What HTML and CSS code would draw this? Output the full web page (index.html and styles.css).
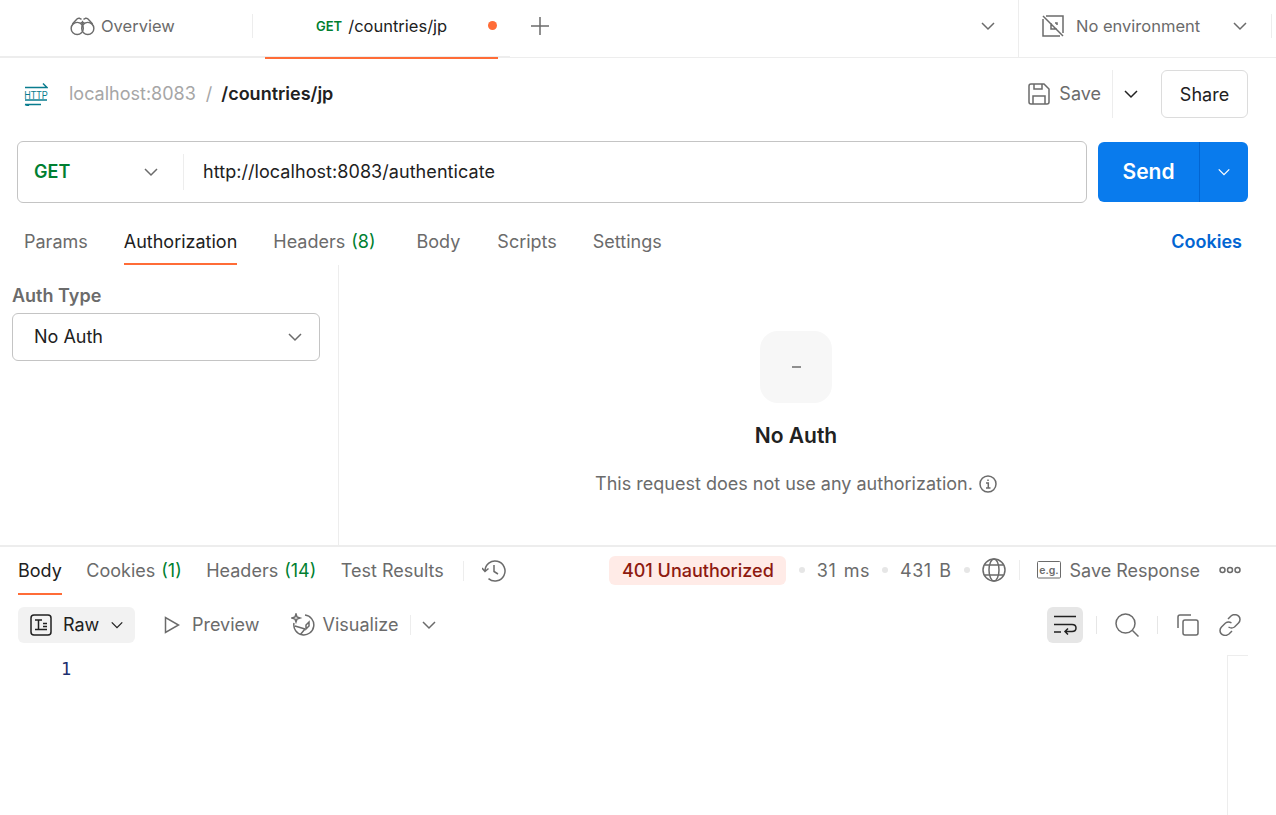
FILE: index.html
```html
<!DOCTYPE html>
<html lang="en">
<head>
    <meta charset="UTF-8">
    <title>/countries/jp</title>
    <link rel="stylesheet" href="styles.css">
</head>
<body>
    <!-- tab strip -->
    <header class="tabstrip">
        <div class="tab-overview">
            <svg class="icon" width="25" height="20" viewBox="0 0 26 20"><circle cx="7.500" cy="12.500" r="6.300"/><circle cx="18.500" cy="12.500" r="6.300"/><path d="M2.500 8 6.500 3.500Q8 1.500 10 2L12 3.200M23.500 8 19.500 3.500Q18 1.500 16 2L14 3.200M11 6.500h4M13 4.500v4"/></svg>
            <span>Overview</span>
        </div>
        <div class="tab-active">
            <span class="method-small">GET</span>
            <span class="tab-name">/countries/jp</span>
            <span class="dot"></span>
        </div>
        <svg class="icon plus" width="20" height="20" viewBox="0 0 20 20"><path d="M10 1v18M1 10h18"/></svg>
        <div class="strip-spacer"></div>
        <svg class="icon chev tabs-chev" width="16" height="16" viewBox="0 0 16 16"><path d="M2 5l6 6 6-6"/></svg>
        <div class="env">
            <svg class="icon" width="22" height="22" viewBox="0 0 22 22"><path d="M4 1h17v17M18 21H1V4M1 1l20 20M9 8v6h6M13 8h2v2"/></svg>
            <span class="env-name">No environment</span>
            <svg class="icon chev" width="16" height="16" viewBox="0 0 16 16"><path d="M2 5l6 6 6-6"/></svg>
            <span class="env-end"></span>
        </div>
    </header>

    <!-- request name row -->
    <div class="namebar">
        <svg class="http-icon" width="24" height="24" viewBox="0 0 24 24"><path d="M1 5.500h22l-4-4M1 18h22M1 22.500h16M1 22.500l4 1.500"/><text transform="translate(12 16.500) scale(.82 1)" text-anchor="middle">HTTP</text></svg>
        <span class="crumb">localhost:8083</span>
        <span class="crumb crumb-sep">/</span>
        <span class="crumb-current">/countries/jp</span>
        <div class="namebar-actions">
            <svg class="icon" width="22" height="22" viewBox="0 0 22 22"><path d="M1 3q0-2 2-2h13l5 5v13q0 2-2 2H3q-2 0-2-2zM6 1v5h8V1M5 21v-8h12v8"/></svg>
            <span class="save-label">Save</span>
            <span class="save-sep"></span>
            <svg class="icon chev dark" width="16" height="16" viewBox="0 0 16 16"><path d="M2 5l6 6 6-6"/></svg>
            <button class="btn-share">Share</button>
        </div>
    </div>

    <!-- url bar -->
    <div class="urlrow">
        <div class="urlbox">
            <div class="method-select">
                <span>GET</span>
                <svg class="icon chev" width="16" height="16" viewBox="0 0 16 16"><path d="M2 5l6 6 6-6"/></svg>
            </div>
            <span class="url">http://localhost:8083/authenticate</span>
        </div>
        <div class="btn-send">
            <span class="send-label">Send</span>
            <span class="send-arrow">
                <svg width="14" height="14" viewBox="0 0 16 16"><path d="M2 5l6 6 6-6"/></svg>
            </span>
        </div>
    </div>

    <!-- request tabs -->
    <nav class="req-tabs">
        <span class="req-tab">Params</span>
        <span class="req-tab selected">Authorization</span>
        <span class="req-tab">Headers <em>(8)</em></span>
        <span class="req-tab">Body</span>
        <span class="req-tab">Scripts</span>
        <span class="req-tab">Settings</span>
        <span class="cookies-link">Cookies</span>
    </nav>

    <section class="auth">
        <div class="auth-left">
            <div class="auth-label">Auth Type</div>
            <div class="auth-select">
                <span>No Auth</span>
                <svg class="icon chev" width="16" height="16" viewBox="0 0 16 16"><path d="M2 5l6 6 6-6"/></svg>
            </div>
        </div>
        <div class="auth-right">
            <div class="auth-tile"><span class="auth-dash"></span></div>
            <div class="auth-title">No Auth</div>
            <div class="auth-desc">
                <span>This request does not use any authorization.</span>
                <svg class="icon" width="18" height="18" viewBox="0 0 18 18"><circle cx="9" cy="9" r="8"/><path d="M7 8h2.300v5M7 13h4.500M9 4.500v1.500"/></svg>
            </div>
        </div>
    </section>

    <!-- response -->
    <section class="response">
        <div class="res-tabs">
            <span class="res-tab selected">Body</span>
            <span class="res-tab">Cookies <em>(1)</em></span>
            <span class="res-tab">Headers <em>(14)</em></span>
            <span class="res-tab">Test Results</span>
            <span class="thin-sep"></span>
            <svg class="icon history" width="24" height="24" viewBox="0 0 24 24"><path d="M3 12a10 10 0 1 1 3.500 7.600M0 9l3 3.500L6.500 9.500M12 6v6.500l4 2.500"/></svg>
            <div class="res-meta">
                <span class="status">401 Unauthorized</span>
                <span class="meta-dot"></span>
                <span class="meta-val">31 ms</span>
                <span class="meta-dot"></span>
                <span class="meta-val">431 B</span>
                <span class="meta-dot"></span>
                <svg class="icon globe" width="24" height="24" viewBox="0 0 24 24"><circle cx="12" cy="12" r="11"/><ellipse cx="12" cy="12" rx="5" ry="11"/><path d="M2.500 7h19M2.500 17h19"/></svg>
                <span class="thin-sep meta-sep"></span>
                <svg class="eg-icon" width="24" height="18" viewBox="0 0 24 18"><rect x="0.500" y="0.500" width="23" height="16.500" rx="1"/><text x="12" y="12.500" text-anchor="middle">e.g.</text></svg>
                <span>Save Response</span>
                <svg class="icon more" width="22" height="8" viewBox="0 0 22 8"><circle cx="3.500" cy="4" r="2.500"/><circle cx="11" cy="4" r="2.500"/><circle cx="18.500" cy="4" r="2.500"/></svg>
            </div>
        </div>
        <div class="res-tools">
            <div class="raw-btn">
                <svg class="icon dark-stroke" width="22" height="22" viewBox="0 0 22 22"><rect x="1" y="1" width="20" height="20" rx="3"/><path d="M5 6h7M8.500 6v9M5 15.500h12M13 9.500h4M13 12.500h4"/></svg>
                <span>Raw</span>
                <svg class="icon chev dark" width="14" height="14" viewBox="0 0 16 16"><path d="M2 5l6 6 6-6"/></svg>
            </div>
            <div class="tool-item">
                <svg class="icon" width="16" height="18" viewBox="0 0 16 18"><path d="M1.500 1.500v15l13-7.500z"/></svg>
                <span>Preview</span>
            </div>
            <div class="tool-item visualize">
                <svg class="icon" width="24" height="24" viewBox="0 0 24 24"><path d="M14 2a10 10 0 1 1-11 8M9 22l5-6M4 13l10 3M18 9l-3 3v4l3-3zM5 1l1 3 3 1-3 1-1 3-1-3-3-1 3-1z"/></svg>
                <span>Visualize</span>
            </div>
            <span class="thin-sep vis-sep"></span>
            <svg class="icon chev" width="16" height="16" viewBox="0 0 16 16"><path d="M2 5l6 6 6-6"/></svg>
            <div class="res-tools-right">
                <div class="wrap-btn">
                    <svg class="icon dark-stroke" width="24" height="20" viewBox="0 0 24 20"><path d="M1 1.500h22M1 9.500h18q4 0 4 3.500t-4 3.500h-7M15 13.500l-3 3 3 3M1 17h7"/></svg>
                </div>
                <span class="tool-sep tool-sep-a"></span>
                <svg class="icon" width="24" height="24" viewBox="0 0 24 24"><circle cx="10.500" cy="10.500" r="9.500"/><path d="M17.500 17.500l6 6"/></svg>
                <span class="tool-sep tool-sep-b"></span>
                <svg class="icon" width="22" height="22" viewBox="0 0 22 22"><path d="M14 1H3Q1 1 1 3v11"/><rect x="6" y="6" width="15" height="15" rx="2"/></svg>
                <svg class="icon link-icon" width="22" height="22" viewBox="0 0 22 22"><path d="M9 5l3-3q2-1.500 4-1.500 5 1 5 5 0 2-1.500 3.500l-4 4q-3 2-6 0M13 17l-3 3q-2 1.500-4 1.500-5-1-5-5 0-2 1.500-3.500l4-4q3-2 6 0"/></svg>
            </div>
        </div>
        <div class="editor">
            <span class="line-no">1</span>
            <div class="scroll-gutter"></div>
        </div>
    </section>
</body>
</html>
```

FILE: styles.css
```css
* {
    box-sizing: border-box;
}

html, body {
    margin: 0;
    height: 100%;
    overflow: hidden;
}

body {
    font-family: 'Inter', 'Liberation Sans', sans-serif;
    font-size: 18px;
    color: #212121;
    background-color: #fff;
}

svg {
    display: block;
    flex: none;
}

.icon {
    fill: none;
    stroke: #6b6b6b;
    stroke-width: 1.5;
}

.chev.dark,
.dark-stroke {
    stroke: #212121;
}

/* tab strip */
.tabstrip {
    position: relative;
    display: flex;
    align-items: center;
    height: 58px;
    border-bottom: 1px solid #ededed;
}

/* thicker part of the rule under the open tabs */
.tabstrip::after {
    content: "";
    position: absolute;
    left: 0;
    bottom: -1px;
    width: 510px;
    height: 2px;
    background-color: #ededed;
}

.tab-overview {
    display: flex;
    align-items: center;
    gap: 6px;
    width: 253px;
    height: 24px;
    margin-bottom: 6px;
    padding-left: 70px;
    border-right: 1px solid #ededed;
    color: #6b6b6b;
    font-size: 16.500px;
}

.tab-active {
    position: relative;
    z-index: 1;
    display: flex;
    align-items: center;
    width: 233px;
    height: 58px;
    margin-left: 12px;
    margin-bottom: -2px;
    padding: 0 0 6px 51px;
    border-bottom: 2px solid #ff6c37;
}

.method-small {
    font-size: 13px;
    font-weight: 600;
    color: #007f31;
    margin-right: 6px;
}

.tab-name {
    font-size: 16.500px;
    width: 140px;
}

.dot {
    width: 9px;
    height: 9px;
    border-radius: 50%;
    background-color: #ff6c37;
}

.plus {
    margin-left: 32px;
    margin-bottom: 6px;
}

.strip-spacer {
    flex: 1;
}

.tabs-chev {
    margin-right: 22px;
    margin-bottom: 5px;
}

.env {
    display: flex;
    align-items: center;
    width: 258px;
    height: 57px;
    padding: 0 0 5px 23px;
    border-left: 1px solid #ededed;
    color: #6b6b6b;
    font-size: 16.500px;
}

.env-name {
    margin-left: 12px;
    width: 156px;
}

.env-end {
    width: 1px;
    height: 24px;
    margin-left: 23px;
    background-color: #ededed;
}

/* name row */
.namebar {
    display: flex;
    align-items: center;
    height: 72px;
    padding: 0 28px 0 24px;
}

.http-icon {
    fill: none;
    stroke: #097c8e;
    stroke-width: 1.500;
    margin-right: 21px;
}

.http-icon text {
    font-family: 'Liberation Sans', sans-serif;
    font-size: 11px;
    fill: #097c8e;
    stroke: none;
}

.crumb,
.crumb-current,
.save-label {
    margin-bottom: 2px;
}

.crumb {
    color: #a6a6a6;
}

.crumb-sep {
    margin-left: 10px;
    margin-right: 9px;
}

.crumb-current {
    font-weight: 600;
}

.namebar-actions {
    display: flex;
    align-items: center;
    margin-left: auto;
}

.save-label {
    margin-left: 9px;
    color: #6b6b6b;
}

.save-sep {
    width: 1px;
    height: 48px;
    margin: 0 10px 0 11px;
    background-color: #ededed;
}

.btn-share {
    font: inherit;
    height: 48px;
    width: 87px;
    margin-left: 22px;
    color: #212121;
    background-color: #fff;
    border: 1px solid #dcdcdc;
    border-radius: 6px;
}

/* url row */
.urlrow {
    display: flex;
    align-items: center;
    gap: 11px;
    height: 62px;
    margin-top: 11px;
    padding: 0 28px 0 17px;
}

.urlbox {
    display: flex;
    align-items: center;
    flex: 1;
    height: 62px;
    padding-bottom: 1px;
    border: 1px solid #c4c4c4;
    border-radius: 6px;
}

.method-select {
    display: flex;
    align-items: center;
    justify-content: space-between;
    width: 166px;
    height: 36px;
    padding: 0 24px 0 16px;
    border-right: 1px solid #ededed;
    font-weight: 600;
    color: #007f31;
}

.url {
    margin-left: 19px;
    margin-bottom: 1px;
    letter-spacing: 0.06px;
}

.btn-send {
    display: flex;
    align-items: center;
    width: 150px;
    height: 60px;
    color: #fff;
    background-color: #097bed;
    border-radius: 6px;
}

.send-label {
    width: 101px;
    margin-bottom: 2px;
    text-align: center;
    font-size: 21px;
    font-weight: 600;
}

.send-arrow {
    display: flex;
    align-items: center;
    justify-content: center;
    flex: 1;
    height: 100%;
    border-left: 1px solid #0265d2;
}

.send-arrow svg {
    fill: none;
    stroke: #fff;
    stroke-width: 1.500;
}

/* request tabs */
.req-tabs {
    display: flex;
    align-items: center;
    height: 62px;
    padding: 15px 34px 0 24px;
    color: #6b6b6b;
}

.req-tab {
    display: flex;
    align-items: center;
    gap: 6px;
    height: 47px;
    margin-right: 36px;
    padding-top: 1px;
    border-bottom: 2px solid transparent;
}

.req-tab.selected {
    color: #212121;
    border-bottom-color: #ff6c37;
}

.req-tab em {
    font-style: normal;
    color: #007f31;
}

.req-tab:nth-child(3) {
    margin-right: 41px;
}

.req-tab:nth-child(4) {
    margin-right: 37px;
}

.cookies-link {
    margin-left: auto;
    font-weight: 600;
    color: #0265d2;
}

/* auth panel */
.auth {
    display: flex;
    height: 282px;
    border-bottom: 2px solid #ededed;
}

.auth-left {
    width: 339px;
    padding: 20px 18px 0 12px;
    border-right: 1px solid #ededed;
}

.auth-label {
    font-weight: 600;
    color: #6b6b6b;
}

.auth-select {
    display: flex;
    align-items: center;
    justify-content: space-between;
    height: 48px;
    margin-top: 7px;
    padding: 0 16px 1px 21px;
    border: 1px solid #c4c4c4;
    border-radius: 6px;
}

.auth-right {
    display: flex;
    flex-direction: column;
    align-items: center;
    flex: 1;
    padding: 66px 23px 0 0;
}

.auth-tile {
    display: flex;
    align-items: center;
    justify-content: center;
    width: 72px;
    height: 72px;
    background-color: #f7f7f7;
    border-radius: 18px;
}

.auth-dash {
    width: 9px;
    height: 2px;
    background-color: #8f8f8f;
}

.auth-title {
    margin-top: 20px;
    font-size: 21px;
    font-weight: 600;
}

.auth-desc {
    display: flex;
    align-items: center;
    gap: 6px;
    margin-top: 25px;
    color: #6b6b6b;
}

/* response */
.res-tabs {
    display: flex;
    align-items: center;
    height: 48px;
    padding: 0 35px 0 18px;
    color: #6b6b6b;
}

.res-tab {
    display: flex;
    align-items: center;
    gap: 6px;
    height: 48px;
    margin-right: 24.500px;
    border-bottom: 2px solid transparent;
}

.res-tab.selected {
    color: #212121;
    border-bottom-color: #ff6c37;
}

.res-tab em {
    font-style: normal;
    color: #007f31;
}

.thin-sep {
    display: block;
    width: 1px;
    height: 20px;
    background-color: #ededed;
}

.res-tabs > .thin-sep {
    margin-left: -5px;
}

.history {
    margin-left: 18px;
}

.res-meta {
    display: flex;
    align-items: center;
    margin-left: auto;
    gap: 12px;
    padding-bottom: 2px;
}

.status {
    margin-right: 1px;
    padding: 4px 12px 4px 13px;
    font-weight: 500;
    color: #8e1a10;
    background-color: #ffebe7;
    border-radius: 6px;
}

.meta-val {
    letter-spacing: 0.5px;
    word-spacing: 2px;
}

.meta-dot {
    width: 6px;
    height: 6px;
    border-radius: 50%;
    background-color: #e6e6e6;
}

.globe {
    margin-right: 1px;
}

.meta-sep {
    margin-right: 5px;
}

.eg-icon {
    fill: none;
    stroke: #6b6b6b;
    margin-right: -3px;
}

.eg-icon text {
    font-family: 'Inter', sans-serif;
    font-size: 10.500px;
    font-weight: 600;
    fill: #6b6b6b;
    stroke: none;
}

.more {
    margin-left: 7px;
}

/* response toolbar */
.res-tools {
    display: flex;
    align-items: center;
    height: 48px;
    margin-top: 6px;
    padding: 6px 35px 6px 18px;
    color: #6b6b6b;
}

.raw-btn {
    display: flex;
    align-items: center;
    gap: 11px;
    width: 117px;
    height: 36px;
    padding: 0 12px;
    color: #212121;
    background-color: #f2f2f2;
    border-radius: 6px;
}

.raw-btn span,
.tool-item span {
    margin-bottom: 2px;
}

.tool-item {
    display: flex;
    align-items: center;
    gap: 12px;
    margin-left: 29px;
}

.visualize {
    margin-left: 31px;
    gap: 8px;
}

.vis-sep {
    margin: 0 10px 0 12px;
}

.res-tools-right {
    display: flex;
    align-items: center;
    gap: 20px;
    margin-left: auto;
}

.wrap-btn {
    display: flex;
    align-items: center;
    justify-content: center;
    width: 36px;
    height: 36px;
    background-color: #e6e6e6;
    border-radius: 6px;
}

.tool-sep {
    display: block;
    width: 1px;
    height: 18px;
    background-color: #e6e6e6;
}

.tool-sep-a {
    margin: 0 -2px 0 -7px;
}

.tool-sep-b {
    margin: 0 -1px 0 -2px;
}

/* editor */
.editor {
    display: flex;
    justify-content: space-between;
    height: 200px;
    padding-left: 61px;
}

.line-no {
    margin-top: 10px;
    font-family: 'DejaVu Sans Mono', monospace;
    font-size: 17px;
    color: #1c2e6e;
}

.scroll-gutter {
    width: 21px;
    margin: 6px 28px 0 0;
    border-left: 1px solid #ededed;
    border-top: 1px solid #ededed;
}
```
